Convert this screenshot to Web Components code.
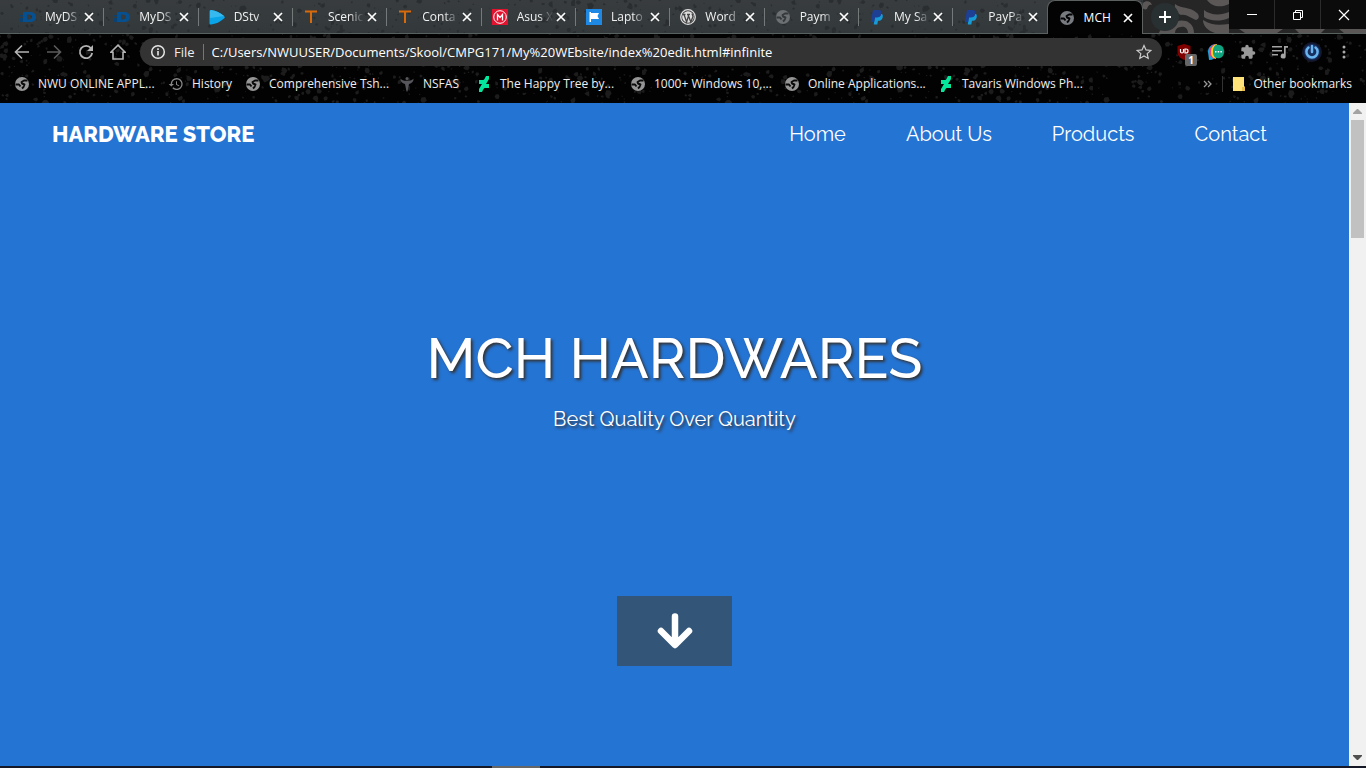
<!DOCTYPE html>
<html lang="en">
<head>
<meta charset="utf-8">
<title>MCH Hardwares</title>
<style>
html, body { margin: 0; height: 100%; }
body { background: #000; overflow: hidden; font-family: "Open Sans", "Noto Sans", sans-serif; font-size: 12px; color: #fff; }
</style>
</head>
<body>
<app-window></app-window>
<script>
const ICONS = {
  d: '<svg viewBox="0 0 16 16"><path fill="#07508f" fill-rule="evenodd" d="M3 3h6.500C14 3 16 5 16 8s-2 5-6.500 5H3zM7 5.500v5h1.500c2.500 0 3.500-1 3.500-2.500S11 5.500 8.500 5.500z"/><path fill="#0b4272" d="M0 6h3v1.500H0zM0 9h3v4H0z"/></svg>',
  play: '<svg viewBox="0 0 16 16"><path fill="#0aa4e8" d="M2 1c5 .5 9 3 13 6 1 1 1 2 0 2.500C11 13 7 15 2 15.500c-1 0-1.500-.5-1.500-1.500V2.500C.5 1.500 1 1 2 1z"/><path fill="#36b9ef" d="M2 1c5 .5 9 3 13 6L1 9V2z"/></svg>',
  t: '<svg viewBox="0 0 16 16"><path fill="#d96a09" d="M2 1.500h12v2H9V14H7V3.500H2z"/></svg>',
  asus: '<svg viewBox="0 0 16 16"><path fill="#e3132f" d="M0 0h16v16H0z"/><circle cx="8" cy="8" r="6.300" fill="none" stroke="#fff" stroke-width="1"/><path fill="none" stroke="#fff" stroke-width="1.300" d="M5.500 11.500V5.500L8 8.500l2.500-3v6"/></svg>',
  flag: '<svg viewBox="0 0 16 16"><path fill="#1e88e5" d="M0 0h16v16H0z"/><path fill="#fff" d="M3.500 3H5v1h8l-1.500 3L13 10H5v3H3.500z"/></svg>',
  wp: '<svg viewBox="0 0 16 16"><circle cx="8" cy="8" r="7.300" fill="#444" stroke="#ddd" stroke-width="1.300"/><circle cx="8" cy="8" r="5.800" fill="#ddd"/><path fill="none" stroke="#444" stroke-width="1.300" d="M2.500 5.500h3M7 5.500h3M4 5.500l2.600 7.500L8.500 7M8 5.500l2.800 7.500L13 7.500l-1-3"/></svg>',
  globe: '<svg viewBox="0 0 16 16"><circle cx="8" cy="8" r="7" fill="currentColor"/><path fill="none" stroke="var(--hole,#0a0a0a)" stroke-width="1.900" stroke-linejoin="round" d="M13.500 4.500H10L7.500 6 8 7.500 10.500 8.500 9.500 11 8 12.500M1.500 8.500H5L6.500 10.500"/></svg>',
  paypal: '<svg viewBox="0 0 16 16"><path fill="#179bd7" d="M6 5h7c1 1 1 2 .5 4-.7 2-2 2.800-4.500 2.800L8.300 15.500H4.800z"/><path fill="#1d3f94" d="M4 1h5.500C12 1 13 2.300 12.500 4.500 12 7.500 10 8.500 7.500 8.500H6L5.200 13H1.800z"/></svg>',
  history: '<svg viewBox="0 0 24 24"><path fill="#888" d="M13 3a9 9 0 0 0-9 9H1l3.900 3.900L9 12H6a7 7 0 1 1 2 5l-1.400 1.400A9 9 0 1 0 13 3zm-1 5v5l4.300 2.500.7-1.200-3.500-2V8z"/></svg>',
  nsfas: '<svg viewBox="0 0 16 16"><circle cx="8" cy="2.500" r="1.500" fill="#56565c"/><path fill="#56565c" d="M1.500 2.500c1 1.500 3 2.300 6.500 2.500 3.500-.2 5.500-1 6.500-2.500.3 3-1.500 4.500-4.500 5.500L8.500 15.500h-1L6 8C3 7 1.200 5.500 1.500 2.500z"/></svg>',
  deviant: '<svg viewBox="0 0 16 16"><path fill="#05e59c" d="M13 0v3l-3 5h3v4H8.500l-1 1L6 16H3v-3l3-5H3V4h4.500l1-1L10 0z"/></svg>',
  close: '<svg viewBox="0 0 16 16"><path stroke="#fff" stroke-width="1.700" d="M4 4l8 8M12 4l-8 8"/></svg>',
  back: '<svg viewBox="0 0 16 16"><path fill="none" stroke="#b4b4b4" stroke-width="1.600" d="M15 8H2M8 1.500L1.500 8 8 14.500"/></svg>',
  forward: '<svg viewBox="0 0 16 16"><path fill="none" stroke="#5c5c5c" stroke-width="1.600" d="M1 8h13M8 1.500L14.500 8 8 14.500"/></svg>',
  reload: '<svg viewBox="0 0 16 16"><path fill="none" stroke="#b4b4b4" stroke-width="1.800" d="M13 4.200A6.200 6.200 0 1 0 14.200 9"/><path fill="#b4b4b4" d="M15 1v6H9z"/></svg>',
  home: '<svg viewBox="0 0 16 16"><path fill="none" stroke="#b4b4b4" stroke-width="1.600" d="M.8 8.300L8 1.200l7.200 7.100H13V15H3V8.300z"/></svg>',
  info: '<svg viewBox="0 0 16 16"><circle cx="8" cy="8" r="6.300" fill="none" stroke="#e6e6e6" stroke-width="1.500"/><path fill="#e6e6e6" d="M7.200 7h1.600v4.500H7.200zM7.200 4.300h1.600v1.600H7.200z"/></svg>',
  star: '<svg viewBox="0 0 16 16"><path fill="none" stroke="#ccc" stroke-width="1.200" d="M8 1.500l2 4.400 4.800.5-3.600 3.200 1 4.800L8 12l-4.200 2.400 1-4.800L1.200 6.400 6 5.900z"/></svg>',
  shield: '<svg viewBox="0 0 16 16"><path fill="#800000" d="M8 0l6.500 2v6c0 4-2.500 6-6.500 8-4-2-6.500-4-6.500-8V2z"/><path fill="none" stroke="#fff" stroke-width="1.200" d="M4.500 5v2.500q0 1.500 1.500 1.500t1.500-1.500V5M9 5v4h1q2 0 2-2t-2-2z"/></svg>',
  chat: '<svg viewBox="0 0 16 16"><path fill="#18a4e0" d="M7 0C2 1 0 4 0 8l1 8c4 0 6-2 8-4z"/><path fill="#f13c75" d="M8 0C3 1 1.500 4 1.500 8s2 6 5 7z"/><path fill="#ffd21e" d="M9 0C4.500 1 3 4 3 8S5 14 8 15z"/><path fill="#0fa37f" d="M10 .8c4 0 6 3 6 7s-2 6.500-6 6.500-5-3-5-6.500 1-7 5-7z"/><path fill="#fff" d="M7 7h1.500v1.500H7zM9.700 7h1.500v1.500H9.700zM12.400 7h1.500v1.500h-1.500z"/></svg>',
  puzzle: '<svg viewBox="0 0 24 24"><path fill="#999" d="M20.500 11H19V7a2 2 0 0 0-2-2h-4V3.500a2.500 2.500 0 0 0-5 0V5H4a2 2 0 0 0-2 2v3.800h1.500a2.700 2.700 0 0 1 0 5.400H2V20a2 2 0 0 0 2 2h3.800v-1.500a2.700 2.700 0 0 1 5.400 0V22H17a2 2 0 0 0 2-2v-4h1.500a2.500 2.500 0 0 0 0-5z"/></svg>',
  queue: '<svg viewBox="0 0 16 16"><path fill="#a4a4a4" d="M0 2h10v1.500H0zM0 6h10v1.500H0zM0 10h6v1.500H0zM12 2h4v1.700h-2.300V12a2.500 2.500 0 1 1-1.700-2.300z"/></svg>',
  power: '<svg viewBox="0 0 20 20"><circle cx="10" cy="10" r="10" fill="#13182f"/><circle cx="10" cy="10" r="8" fill="#173060"/><path fill="none" stroke="#69b5ef" stroke-width="2.500" stroke-linecap="round" d="M6.500 5.500a5.600 5.600 0 1 0 7 0M10 4V10"/></svg>',
  menu: '<svg viewBox="0 0 16 16"><g fill="#aaa"><circle cx="8" cy="3" r="1.500"/><circle cx="8" cy="8" r="1.500"/><circle cx="8" cy="13" r="1.500"/></g></svg>',
  plus: '<svg viewBox="0 0 16 16"><path stroke="#fff" stroke-width="2" d="M8 2v12M2 8h12"/></svg>',
  min: '<svg viewBox="0 0 12 12"><path stroke="#fff" d="M1 5.500h10"/></svg>',
  restore: '<svg viewBox="0 0 12 12"><path fill="none" stroke="#fff" d="M3.500 3.500v-2h7v7h-2M1.500 3.500h7v7h-7z"/></svg>',
  exit: '<svg viewBox="0 0 12 12"><path stroke="#fff" stroke-width="1.200" d="M1 1l10 10M11 1L1 11"/></svg>',
  more: '<svg viewBox="0 0 12 12"><path fill="none" stroke="#999" stroke-width="1.300" d="M2 3L5 6 2 9M6 3L9 6 6 9"/></svg>',
  folder: '<svg viewBox="0 0 16 16"><path fill="#ffe27a" d="M2 1h11v9l1 1v4H2z"/><path fill="#e8be4c" d="M11 11h3v4h-3z"/></svg>',
  arrow: '<svg viewBox="0 0 36 36"><path fill="none" stroke="#fff" stroke-width="6.500" stroke-linecap="round" stroke-linejoin="round" d="M18 3.500v28M4 18l14 14 14-14"/></svg>'
};

const RESET = `:host,*{box-sizing:border-box}
button,a,input{font:inherit;color:inherit;background:none;border:0;padding:0;margin:0;text-decoration:none}
button{display:grid;place-items:center}`;

function define(name, html) {
  const tpl = document.createElement('template');
  tpl.innerHTML = html;
  customElements.define(name, class extends HTMLElement {
    constructor() {
      super();
      this.attachShadow({ mode: 'open' }).append(tpl.content.cloneNode(true));
    }
  });
}

class UiIcon extends HTMLElement {
  connectedCallback() {
    if (this.shadowRoot) return;
    this.attachShadow({ mode: 'open' }).innerHTML =
      `<style>:host{display:block;flex:none;width:var(--size,16px);height:var(--size,16px)}svg{display:block;width:100%;height:100%}</style>${ICONS[this.getAttribute('name')]}`;
  }
}
customElements.define('ui-icon', UiIcon);

/* Splattered backdrop of the browser theme, from a seeded generator */
class PaintSpeckles extends HTMLElement {
  connectedCallback() {
    if (this.shadowRoot) return;
    let seed = Number(this.getAttribute('seed')) || 7;
    const rnd = () => (seed = (seed * 16807) % 2147483647) / 2147483647;
    let d = '';
    const n = Number(this.getAttribute('count')) || 400;
    for (let i = 0; i < n; i++) {
      const x = rnd() * 683, y = rnd() * 104, r = 0.6 + rnd() * rnd() * 3.2;
      for (let k = 0; k < 6; k++) {
        const a = k * Math.PI / 3, q = r * (0.6 + rnd() * 0.7);
        d += (k ? 'L' : 'M') + (x + q * Math.cos(a)).toFixed(1) + ' ' + (y + q * Math.sin(a)).toFixed(1);
      }
      d += 'z';
    }
    this.attachShadow({ mode: 'open' }).innerHTML = `<style>:host{display:block;overflow:hidden}svg{display:block;width:100%;height:100%}</style>
      <svg aria-hidden="true"><defs><pattern id="p" width="683" height="104" patternUnits="userSpaceOnUse"><path d="${d}" fill="${this.getAttribute('ink')}"/></pattern></defs><rect width="100%" height="100%" fill="url(#p)"/></svg>`;
  }
}
customElements.define('paint-speckles', PaintSpeckles);

class BrowserTab extends HTMLElement {
  connectedCallback() {
    if (this.shadowRoot) return;
    this.attachShadow({ mode: 'open' }).innerHTML = `<style>${RESET}
      :host{display:flex;flex:1 1 0;min-width:0;height:33px;align-items:center;position:relative;padding:0 6px 0 11px;color:#f1f1f1;--hole:#34393b}
      :host(:not([active]):not([first]))::before{content:"";position:absolute;left:0;top:8px;width:1px;height:18px;background:#74797a}
      :host([active]){background:#030303;border:1px solid #5d6160;border-bottom:0;border-radius:8px 8px 0 0;height:34px;color:#fff;--hole:#030303;--mark:#777b80}
      .title{flex:1;min-width:0;display:flex;align-items:center;gap:9px;overflow:hidden}
      .title span{flex:1;min-width:0;text-align:left;overflow:hidden;white-space:nowrap;line-height:20px;-webkit-mask-image:linear-gradient(90deg,#000 60%,transparent)}
      :host([active]) .title span{-webkit-mask-image:none}
      .title ui-icon{color:var(--mark,#6c7073)}
    </style>
    <button class="title" role="tab"><ui-icon name="${this.getAttribute('icon')}"></ui-icon><span><slot></slot></span></button>
    <button aria-label="Close tab"><ui-icon name="close"></ui-icon></button>`;
  }
}
customElements.define('browser-tab', BrowserTab);

define('tab-strip', `<style>${RESET}
  :host{display:flex;height:34px;position:relative;background:#262626;padding-left:9px}
  .line{position:absolute;inset:0;border-bottom:1px solid #596060;background:linear-gradient(#383c3e,#33393b);right:223px}
  .tint{position:absolute;inset:0 223px 1px 0}
  .tabs{flex:1;display:flex;min-width:0;position:relative}
  .side{flex:none;width:223px;display:flex;position:relative;border-bottom:1px solid #596060}
  .damask{position:absolute;left:0;top:0;width:100%;height:100%}
  .new{width:28px;height:28px;border-radius:50%;background:#293032;margin:3px 0 0 8px;position:relative}
  .controls{margin-left:auto;display:flex;height:29px;position:relative;gap:1px;background:#2b2b2b;--size:12px}
  .controls button{width:45px;background:#0b0b0b}
  </style>
  <div class="line"></div><paint-speckles class="tint" seed="91" count="800" ink="#2a2e30"></paint-speckles>
  <div class="tabs" role="tablist">
  <browser-tab first icon="d">MyDS</browser-tab><browser-tab icon="d">MyDS</browser-tab><browser-tab icon="play">DStv</browser-tab><browser-tab icon="t">Scenic</browser-tab><browser-tab icon="t">Conta</browser-tab><browser-tab icon="asus">Asus X</browser-tab><browser-tab icon="flag">Lapto</browser-tab><browser-tab icon="wp">Word</browser-tab><browser-tab icon="globe">Paym</browser-tab><browser-tab icon="paypal">My Sa</browser-tab><browser-tab icon="paypal">PayPa</browser-tab><browser-tab active icon="globe">MCH</browser-tab>
  </div>
  <div class="side">
  <svg class="damask" viewBox="0 0 223 33" preserveAspectRatio="none" aria-hidden="true"><g fill="#5b5757"><path d="M0 3c3-3 8-2 9 2-3-1-4 1-5 4-2 1-4 0-4-1zM32 4c6 5 14 2 22 9 3 3 2 6-1 7-6-2-9-6-15-5-4-2-7-6-6-11z"/><path fill-rule="evenodd" d="M16 33c1-4 5-5 9-5 4-6 11-9 18-7 5 2 8 6 8 12h-6c0-4-3-7-7-6-4 0-6 3-6 6z"/><path d="M61 10c6 5 16 6 25 2v6c-9 4-20 3-25-1zM60 20c9 6 17 5 26 4v9H72c-7-2-12-7-12-13zM64 0h22v4c-8 4-17 3-22-4z"/><path d="M96 29h44l-6 4h-32zM152 29h30l-4 4h-22zM196 29h27v4h-22z"/></g></svg>
  <button class="new" aria-label="New tab"><ui-icon name="plus"></ui-icon></button>
  <div class="controls"><button aria-label="Minimize"><ui-icon name="min"></ui-icon></button><button aria-label="Restore"><ui-icon name="restore"></ui-icon></button><button aria-label="Close"><ui-icon name="exit"></ui-icon></button></div>
  </div>`);

define('tool-bar', `<style>${RESET}
  :host{display:flex;height:36px;align-items:center;padding:0 14px;position:relative}
  .nav{display:flex;gap:16px}
  .box{flex:1;min-width:0;height:28px;margin:0 14px;border-radius:14px;background:#333;display:flex;align-items:center;padding:0 10px;color:#eee;font-size:13px}
  .box span{margin:0 8px}
  .box i{width:1px;height:16px;background:#777;margin-right:8px}
  .box input{flex:1;min-width:0;height:20px;color:#fff;outline:0}
  .ext{display:flex;gap:16px;align-items:center}
  .ext button{position:relative}
  .ext b{position:absolute;left:9px;top:10px;width:12px;height:12px;border-radius:2px;background:#666;font:700 10px/12px "Open Sans",sans-serif}
  .ava{--size:20px;margin:0 -2px}
  </style>
  <div class="nav"><button aria-label="Back"><ui-icon name="back"></ui-icon></button><button aria-label="Forward"><ui-icon name="forward"></ui-icon></button><button aria-label="Reload"><ui-icon name="reload"></ui-icon></button><button aria-label="Home"><ui-icon name="home"></ui-icon></button></div>
  <div class="box"><ui-icon name="info"></ui-icon><span>File</span><i></i><input aria-label="Address" value="C:/Users/NWUUSER/Documents/Skool/CMPG171/My%20WEbsite/index%20edit.html#infinite"><button aria-label="Bookmark this page"><ui-icon name="star"></ui-icon></button></div>
  <div class="ext"><button aria-label="Blocker"><ui-icon name="shield"></ui-icon><b>1</b></button><button aria-label="Chat"><ui-icon name="chat"></ui-icon></button><button aria-label="Extensions"><ui-icon name="puzzle"></ui-icon></button><button aria-label="Media"><ui-icon name="queue"></ui-icon></button><button class="ava" aria-label="Profile"><ui-icon name="power"></ui-icon></button><button aria-label="Menu"><ui-icon name="menu"></ui-icon></button></div>`);

define('bookmarks-bar', `<style>${RESET}
  :host{display:flex;height:33px;align-items:center;padding:0 14px 5px;position:relative;color:#eee;font-size:12px;line-height:20px}
  a{display:flex;align-items:center;gap:8px;width:154px;white-space:nowrap;flex:none}
  .short{width:77px}
  ui-icon{color:#959595}
  .end{margin-left:auto;display:flex;align-items:center;gap:8px}
  .end a{width:auto;gap:6px}
  .end i{width:1px;height:16px;background:#333}
  .end button{--size:12px}
  </style>
  <a href="#"><ui-icon name="globe"></ui-icon>NWU ONLINE APPL...</a><a class="short" href="#"><ui-icon name="history"></ui-icon>History</a><a href="#"><ui-icon name="globe"></ui-icon>Comprehensive Tsh...</a><a class="short" href="#"><ui-icon name="nsfas"></ui-icon>NSFAS</a><a href="#"><ui-icon name="deviant"></ui-icon>The Happy Tree by...</a><a href="#"><ui-icon name="globe"></ui-icon>1000+ Windows 10,...</a><a href="#"><ui-icon name="globe"></ui-icon>Online Applications...</a><a href="#"><ui-icon name="deviant"></ui-icon>Tavaris Windows Ph...</a>
  <div class="end"><button aria-label="More bookmarks"><ui-icon name="more"></ui-icon></button><i></i><a href="#"><ui-icon name="folder"></ui-icon>Other bookmarks</a></div>`);

define('store-page', `<style>${RESET}
  :host{display:flex;flex-direction:column;flex:1;min-width:0;background:#2474d4;color:#fff;font-family:Raleway,Lato,sans-serif;font-size:20px}
  header{display:flex;align-items:center;justify-content:space-between;height:62px;padding:0 82px 0 52px;line-height:30px}
  .brand{font-weight:800;font-size:22px}
  nav{display:flex;gap:60px}
  main{flex:1;display:flex;flex-direction:column;align-items:center;justify-content:space-between;padding:153px 0 100px;text-align:center;text-shadow:2px 2px 3px #333}
  h1{margin:0;font-weight:500;font-size:56px;line-height:80px}
  p{margin:6px 0 0;line-height:30px}
  .down{display:grid;place-items:center;width:115px;height:70px;background:#335577;--size:36px}
  </style>
  <header><a class="brand" href="#">HARDWARE STORE</a><nav><a href="#">Home</a><a href="#">About Us</a><a href="#">Products</a><a href="#">Contact</a></nav></header>
  <main><div><h1>MCH HARDWARES</h1><p>Best Quality Over Quantity</p></div><a class="down" href="#infinite" aria-label="Scroll down"><ui-icon name="arrow"></ui-icon></a></main>`);

define('scroll-rail', `<style>${RESET}
  :host{display:flex;flex-direction:column;width:17px;background:#f1f1f1;padding:0 2px}
  button{height:17px}
  svg{width:9px;height:5px;display:block}
  .thumb{height:118px;background:#c1c1c1;margin-bottom:auto}
  </style><button aria-label="Scroll up"><svg viewBox="0 0 9 5"><path fill="#a3a3a3" d="M4 0h1l4 4v1H0V4z"/></svg></button><div class="thumb"></div><button aria-label="Scroll down"><svg viewBox="0 0 9 5"><path fill="#505050" d="M0 0h9v1L5 5H4L0 1z"/></svg></button>`);

define('app-window', `<style>
  :host{display:flex;flex-direction:column;height:100vh}
  .bars{position:relative;background:#020202}
  .bars>paint-speckles{position:absolute;inset:34px 0 0}
  .view{flex:1;display:flex;min-height:0}
  .task{height:2px;background:#151827;display:flex;justify-content:center}
  .task i{width:48px;background:#666;margin-right:334px}
  </style>
  <div class="bars"><paint-speckles seed="23" count="900" ink="#1c1c1c"></paint-speckles><tab-strip></tab-strip><tool-bar></tool-bar><bookmarks-bar></bookmarks-bar></div>
  <div class="view"><store-page></store-page><scroll-rail></scroll-rail></div>
  <div class="task"><i></i></div>`);
</script>
</body>
</html>
